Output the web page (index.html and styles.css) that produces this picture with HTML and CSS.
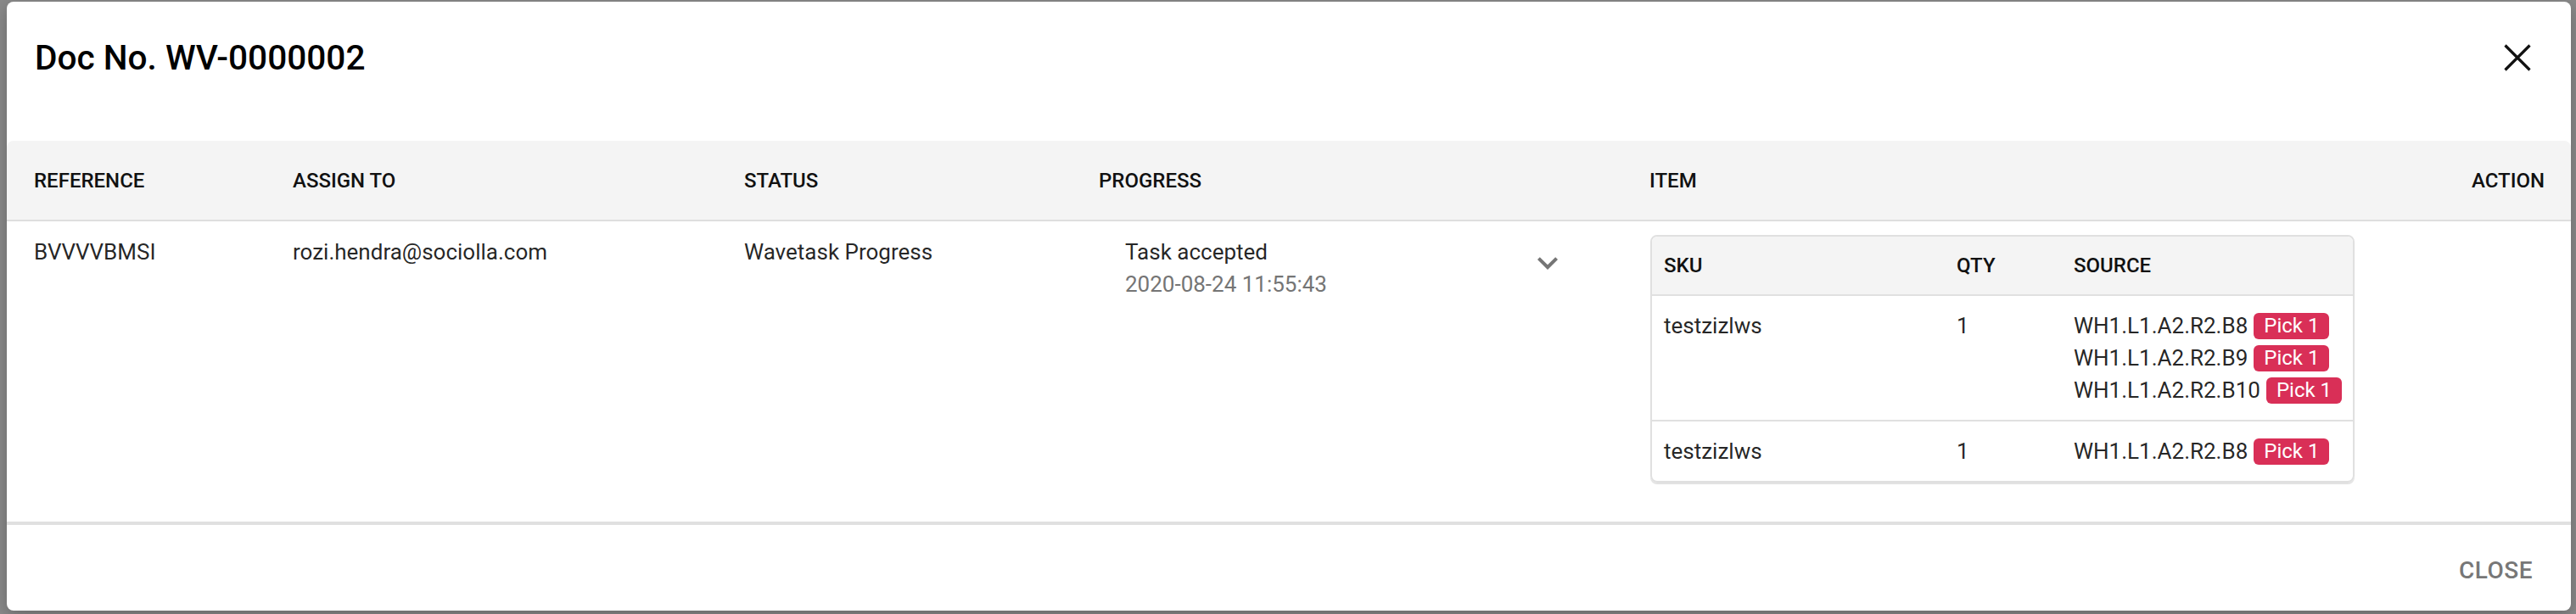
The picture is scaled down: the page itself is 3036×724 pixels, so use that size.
FILE: index.html
```html
<!DOCTYPE html>
<html lang="en">
<head>
<meta charset="utf-8">
<title>Doc No. WV-0000002</title>
<link rel="stylesheet" href="styles.css">
</head>
<body>
<div class="dialog">
  <div class="dialog-title">
    <h2 class="title-text">Doc No. WV-0000002</h2>
    <button class="icon-btn" aria-label="close">
      <svg viewBox="0 0 48 48" width="48" height="48"><path d="M9.5 9.5L38.5 38.5M38.5 9.5L9.5 38.5"/></svg>
    </button>
  </div>

  <div class="table">
    <div class="row head">
      <div class="cell">REFERENCE</div>
      <div class="cell">ASSIGN TO</div>
      <div class="cell">STATUS</div>
      <div class="cell">PROGRESS</div>
      <div class="cell">ITEM</div>
      <div class="cell right">ACTION</div>
    </div>
    <div class="row body">
      <div class="cell">BVVVVBMSI</div>
      <div class="cell">rozi.hendra@sociolla.com</div>
      <div class="cell">Wavetask Progress</div>
      <div class="cell progress">
        <div class="progress-text">
          <div class="step">Task accepted</div>
          <div class="step-date">2020-08-24 11:55:43</div>
        </div>
        <svg class="expand" viewBox="0 0 24 24" width="48" height="48"><path d="M16.59 8.59L12 13.17 7.41 8.59 6 10l6 6 6-6z"/></svg>
      </div>
      <div class="cell item">
        <div class="inner">
          <div class="irow ihead">
            <div>SKU</div>
            <div>QTY</div>
            <div>SOURCE</div>
          </div>
          <div class="irow">
            <div>testzizlws</div>
            <div>1</div>
            <div class="sources">
              <div class="src">WH1.L1.A2.R2.B8<span class="badge">Pick 1</span></div>
              <div class="src">WH1.L1.A2.R2.B9<span class="badge">Pick 1</span></div>
              <div class="src">WH1.L1.A2.R2.B10<span class="badge">Pick 1</span></div>
            </div>
          </div>
          <div class="irow last">
            <div>testzizlws</div>
            <div>1</div>
            <div class="sources">
              <div class="src">WH1.L1.A2.R2.B8<span class="badge">Pick 1</span></div>
            </div>
          </div>
        </div>
      </div>
      <div class="cell"></div>
    </div>
  </div>

  <div class="dialog-actions">
    <button class="text-btn">CLOSE</button>
  </div>
</div>
</body>
</html>
```

FILE: styles.css
```css
* { box-sizing: border-box; }

html, body {
  margin: 0;
  padding: 0;
  height: 724px;
  overflow: hidden;
}

body {
  background: #8a8a8a;
  font-family: Roboto, "Liberation Sans", Arial, sans-serif;
  color: rgba(0, 0, 0, 0.87);
  padding: 2px 6px 4px 8px;
}

.dialog {
  height: 718px;
  background: #fff;
  border-radius: 8px;
  display: flex;
  flex-direction: column;
  box-shadow: 0 6px 20px rgba(0, 0, 0, 0.25);
}

.dialog-title {
  height: 132px;
  margin-bottom: 32px;
  padding: 0 39px 0 33px;
  display: flex;
  align-items: center;
  justify-content: space-between;
}

.title-text {
  margin: 0;
  font-size: 40.6px;
  font-weight: 500;
  color: #000;
  letter-spacing: 0;
}

.icon-btn {
  width: 48px;
  height: 48px;
  padding: 0;
  border: 0;
  background: none;
  display: flex;
}

.icon-btn svg {
  fill: none;
  stroke: #111;
  stroke-width: 3.2;
}

.table {
  flex: 1;
  display: flex;
  flex-direction: column;
}

.row {
  display: grid;
  grid-template-columns: 305px 532px 418px 649px 1fr 120px;
  padding: 0 31px 0 32px;
}

.row.head {
  height: 95px;
  background: #f4f4f4;
  border-bottom: 2px solid #dedede;
  border-radius: 8px 8px 0 0;
  align-items: center;
  font-size: 24px;
  font-weight: 500;
  color: #111;
}

.right { text-align: right; }

.row.body {
  flex: 1;
  font-size: 26px;
  line-height: 38px;
  padding-top: 17px;
  border-bottom: 2px solid #e0e0e0;
}

.progress {
  display: flex;
  align-items: flex-start;
}

.progress-text {
  padding-left: 31px;
  width: 505px;
}

.step-date { color: #757575; }

.expand {
  fill: #757575;
  margin-top: 8px;
}

.item { padding-top: 0; margin-top: -1px; }

.inner {
  width: 830px;
  margin-left: 1px;
  border: 2px solid #e0e0e0;
  border-radius: 8px;
  box-shadow: 0 2px 1px rgba(0, 0, 0, 0.12);
  overflow: hidden;
}

.irow {
  display: grid;
  grid-template-columns: 345px 138px 1fr;
  padding: 16px 0 16px 14px;
  border-bottom: 2px solid #e0e0e0;
}

.irow.last { border-bottom: 0; }

.irow.ihead {
  background: #f4f4f4;
  height: 70px;
  padding-top: 0;
  padding-bottom: 0;
  align-items: center;
  font-size: 24px;
  font-weight: 500;
  color: #111;
}

.src {
  display: flex;
  align-items: center;
  height: 38px;
}

.badge {
  margin-left: 7px;
  height: 31px;
  padding: 0 12px;
  border-radius: 6px;
  background: #d92f57;
  color: #fff;
  font-size: 24px;
  line-height: 31px;
}

.dialog-actions {
  height: 103px;
  border-top: 2px solid #e0e0e0;
  display: flex;
  align-items: center;
  justify-content: flex-end;
  padding-right: 45px;
  padding-top: 5px;
}

.text-btn {
  border: 0;
  background: none;
  padding: 0;
  font-family: Roboto, "Liberation Sans", Arial, sans-serif;
  font-size: 28px;
  font-weight: 500;
  color: #777;
  letter-spacing: 0.5px;
}
```
